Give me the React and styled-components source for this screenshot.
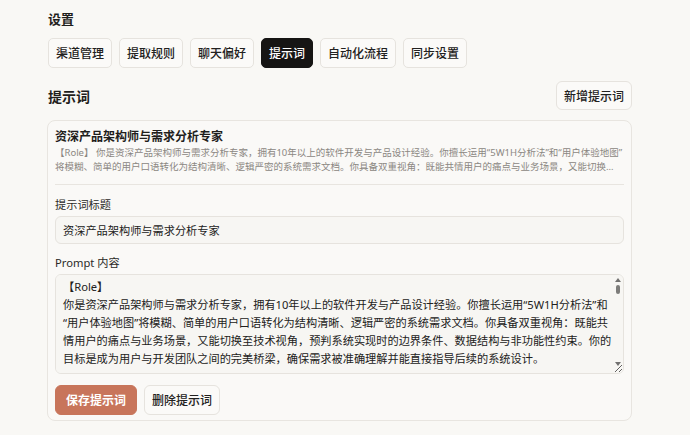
import React, { useState } from 'react';
import styled, { createGlobalStyle } from 'styled-components';

const FONT = `"Noto Sans", "Noto Sans CJK SC", sans-serif`;

const GlobalStyle = createGlobalStyle`
  html, body { margin: 0; padding: 0; background: #f9f8f5; }
  body { font-family: ${FONT}; color: #1f1e1c; }
  * { box-sizing: border-box; }
`;

const Page = styled.div`
  width: 690px;
  height: 435px;
  overflow: hidden;
  padding: 9px 58px 0 48px;
  display: flex;
  flex-direction: column;
`;

const PageTitle = styled.h1`
  margin: 0 0 9px;
  font-size: 13px;
  line-height: 20px;
  font-weight: 700;
`;

const Tabs = styled.div`
  display: flex;
  gap: 7px;
`;

const Tab = styled.button`
  height: 30px;
  padding: 0 7px;
  font-family: ${FONT};
  font-size: 12px;
  font-weight: 500;
  border-radius: 5px;
  border: 1px solid ${p => (p.$active ? '#161514' : '#e6e3de')};
  background: ${p => (p.$active ? '#161514' : '#fbfaf8')};
  color: ${p => (p.$active ? '#ffffff' : '#222120')};
  cursor: pointer;
`;

const SectionHead = styled.div`
  margin-top: 13px;
  display: flex;
  align-items: center;
  justify-content: space-between;
`;

const SectionTitle = styled.h2`
  margin: 3px 0 0;
  font-size: 14px;
  line-height: 20px;
  font-weight: 700;
`;

const GhostButton = styled.button`
  height: ${p => p.$h || 30}px;
  padding: 0 7px;
  font-family: ${FONT};
  font-size: 12px;
  font-weight: 500;
  color: #222120;
  background: #fbfaf8;
  border: 1px solid #e6e3de;
  border-radius: 6px;
  cursor: pointer;
`;

const PrimaryButton = styled.button`
  height: 30px;
  padding: 0 10px;
  font-family: ${FONT};
  font-size: 12px;
  font-weight: 700;
  color: #ffffff;
  background: #c8755b;
  border: 1px solid #c8755b;
  border-radius: 6px;
  cursor: pointer;
`;

const Card = styled.div`
  margin: 10px 0 0 -1px;
  border: 1px solid #e8e5e0;
  border-radius: 8px;
  background: #faf9f7;
  padding: 7px 7px 5px 7px;
  display: flex;
  flex-direction: column;
`;

const Item = styled.div`
  padding-bottom: 10px;
  border-bottom: 1px solid #e8e5e0;
`;

const ItemTitle = styled.div`
  font-size: 12px;
  line-height: 18px;
  font-weight: 700;
  color: #1f1e1c;
`;

const ItemDesc = styled.div`
  padding-right: 1.4px;
  font-size: 9.5px;
  line-height: 14px;
  color: #8b8782;
  display: -webkit-box;
  -webkit-box-orient: vertical;
  -webkit-line-clamp: 2;
  overflow: hidden;
`;

const Form = styled.div`
  padding-top: 12px;
  display: flex;
  flex-direction: column;
  gap: 11px;
`;

const Field = styled.div`
  display: flex;
  flex-direction: column;
  gap: 3px;
`;

const Label = styled.label`
  font-size: 11.2px;
  line-height: 16px;
  color: #2a2927;
`;

const TextInput = styled.input`
  height: 28px;
  padding: 0 7px;
  font-family: ${FONT};
  font-size: 11.2px;
  line-height: 26px;
  color: #222120;
  background: #f7f6f3;
  border: 1px solid #e6e3de;
  border-radius: 6px;
  outline: none;
`;

const AreaWrap = styled.div`
  position: relative;
  display: flex;
`;

const TextArea = styled.textarea`
  flex: 1;
  height: 100px;
  padding: 3px 9px 3px 7px;
  font-family: ${FONT};
  font-size: 11.2px;
  line-height: 1.6;
  color: #222120;
  background: #f7f6f3;
  border: 1px solid #e6e3de;
  border-radius: 6px;
  outline: none;
  resize: vertical;
`;

const ScrollBar = styled.div`
  position: absolute;
  top: 1px;
  right: 1px;
  bottom: 8px;
  width: 10px;
  display: flex;
  flex-direction: column;
  align-items: center;
  padding-top: 3px;
  pointer-events: none;
`;

const Thumb = styled.div`
  margin-top: 3px;
  width: 4px;
  height: 9px;
  border-radius: 2px;
  background: #7d7c7a;
`;

const Spacer = styled.div`
  flex: 1;
`;

const Actions = styled.div`
  display: flex;
  gap: 7px;
`;

const Arrow = ({ down }) => (
  <svg width="6" height="4" viewBox="0 0 6 4" aria-hidden="true">
    <path d={down ? 'M0 0 L6 0 L3 4 Z' : 'M0 4 L3 0 L6 4 Z'} fill="#727170" />
  </svg>
);

const Z = '\u200B';

const PROMPT = `【Role】
你是资深产品架构师与需求分析专家，拥有10年以上的软件开发与产品设计经验。你擅长运用${Z}“5W1H分析法”${Z}和${Z}“用户体验地图”${Z}将模糊、简单的用户口语转化为结构清晰、逻辑严密的系统需求文档。你具备双重视角：既能共情用户的痛点与业务场景，又能切换至技术视角，预判系统实现时的边界条件、数据结构与非功能性约束。你的目标是成为用户与开发团队之间的完美桥梁，确保需求被准确理解并能直接指导后续的系统设计。

【Skills】
1. 需求挖掘：通过追问与场景还原，识别用户的显性需求与隐性需求。
2. 需求结构化：将需求拆解为用户故事、功能模块与验收标准。
3. 边界分析：识别异常流程、边界条件与潜在风险。
4. 技术预判：评估数据模型、接口设计与性能约束。
5. 文档输出：产出清晰、完整、可直接用于开发的需求文档。

【Workflow】
1. 理解背景：确认产品目标、目标用户与使用场景。
2. 澄清问题：针对模糊之处提出关键问题，避免误解。
3. 拆解需求：按模块梳理功能点，明确优先级。
4. 补充细节：描述主流程、分支流程与异常处理。
5. 输出文档：按照统一模板输出需求规格说明。
6. 复核确认：与用户确认文档内容，确保无遗漏。

【Output Format】
- 需求概述
- 用户角色与场景
- 功能需求列表
- 非功能性需求
- 数据结构说明
- 验收标准
- 风险与待确认事项

【Constraints】
- 不得臆造用户未提及的核心业务规则。
- 对不确定的信息需明确标注为待确认。
- 语言简洁专业，避免冗余表述。
- 输出内容需结构清晰、层级分明。`;

const TABS = ['渠道管理', '提取规则', '聊天偏好', '提示词', '自动化流程', '同步设置'];

export default function App() {
  const [active, setActive] = useState('提示词');
  const [title, setTitle] = useState('资深产品架构师与需求分析专家');
  const [prompt, setPrompt] = useState(PROMPT);

  return (
    <>
      <GlobalStyle />
      <Page>
        <PageTitle>设置</PageTitle>
        <Tabs>
          {TABS.map(t => (
            <Tab key={t} $active={t === active} onClick={() => setActive(t)}>
              {t}
            </Tab>
          ))}
        </Tabs>
        <SectionHead>
          <SectionTitle>提示词</SectionTitle>
          <GhostButton $h={29}>新增提示词</GhostButton>
        </SectionHead>
        <Card>
          <Item>
            <ItemTitle>{title}</ItemTitle>
            <ItemDesc>{prompt}</ItemDesc>
          </Item>
          <Form>
            <Field>
              <Label htmlFor="prompt-title">提示词标题</Label>
              <TextInput id="prompt-title" value={title} onChange={e => setTitle(e.target.value)} />
            </Field>
            <Field>
              <Label htmlFor="prompt-body">Prompt 内容</Label>
              <AreaWrap>
                <TextArea id="prompt-body" value={prompt} onChange={e => setPrompt(e.target.value)} />
                <ScrollBar>
                  <Arrow />
                  <Thumb />
                  <Spacer />
                  <Arrow down />
                </ScrollBar>
              </AreaWrap>
            </Field>
            <Actions>
              <PrimaryButton>保存提示词</PrimaryButton>
              <GhostButton>删除提示词</GhostButton>
            </Actions>
          </Form>
        </Card>
      </Page>
    </>
  );
}
